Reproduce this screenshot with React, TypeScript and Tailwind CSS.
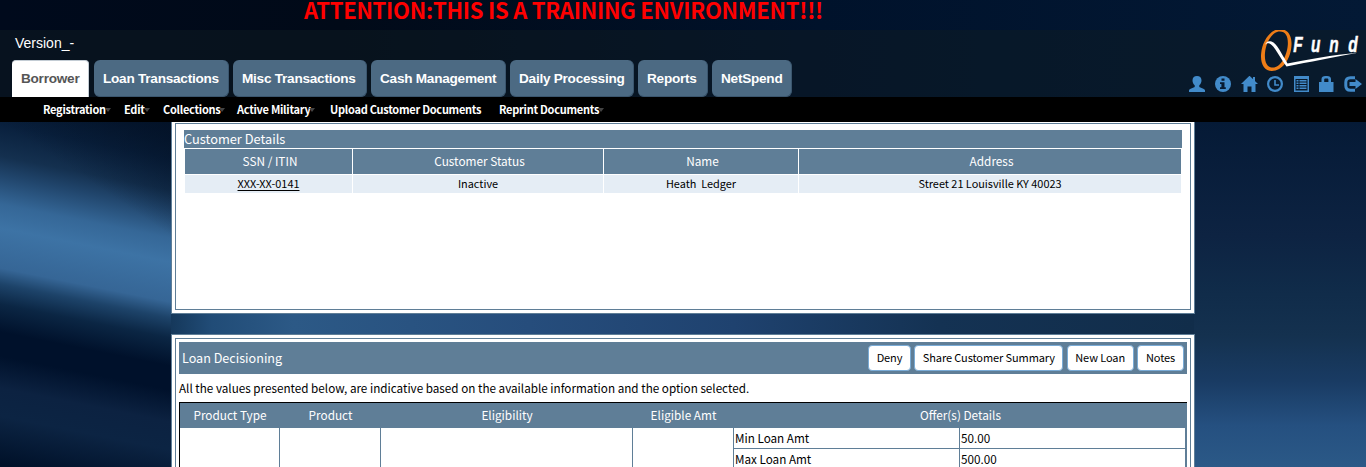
import React from "react";

const cjk = "font-['Noto_Sans_CJK_SC','Open_Sans',sans-serif]";

const idle = "rounded-[6px] bg-[#4c6a83] text-white border-r border-b border-[#3b566e]";

const tabs = [
  { label: "Borrower", box: "w-[77px] mr-[5px] rounded-t-[4px] bg-white text-[#555] border-r border-t border-[#c3ccd4]" },
  { label: "Loan Transactions", box: `w-[135px] mr-1 pt-px ${idle}` },
  { label: "Misc Transactions", box: `w-[134px] mr-1 pt-px ${idle}` },
  { label: "Cash Management", box: `w-[135px] mr-1 pt-px ${idle}` },
  { label: "Daily Processing", box: `w-[124px] mr-1 pt-px ${idle}` },
  { label: "Reports", box: `w-[70px] mr-1 pt-px ${idle}` },
  { label: "NetSpend", box: `w-[80px] pt-px ${idle}` },
];

const menu = [
  { label: "Registration", box: "w-[81px]", arrow: true },
  { label: "Edit", box: "w-[39px]", arrow: true },
  { label: "Collections", box: "w-[74px]", arrow: true },
  { label: "Active Military", box: "w-[93px]", arrow: true },
  { label: "Upload Customer Documents", box: "w-[169px]", arrow: false },
  { label: "Reprint Documents", box: "w-[104px]", arrow: true },
];

const customerHeads = ["SSN / ITIN", "Customer Status", "Name", "Address"];
const customerCell = "h-[18px] bg-[#e5edf5] text-[10.9px] leading-[17px]";

const actions = [
  { label: "Deny", box: "w-[43px]" },
  { label: "Share Customer Summary", box: "w-[149px]" },
  { label: "New Loan", box: "w-[67px]" },
  { label: "Notes", box: "w-[47px]" },
];

function Backdrop() {
  return (
    <svg className="absolute inset-0 -z-10" width="1366" height="467" viewBox="0 0 1366 467">
      <defs>
        <linearGradient id="top" x1="0" y1="0" x2="1" y2="0">
          <stop offset="0" stopColor="#000a1c" />
          <stop offset="0.25" stopColor="#010a18" />
          <stop offset="0.6" stopColor="#00122b" />
          <stop offset="1" stopColor="#031935" />
        </linearGradient>
        <linearGradient id="left" gradientUnits="userSpaceOnUse" x1="0" y1="80" x2="0" y2="480">
          <stop offset="0" stopColor="#04152c" />
          <stop offset="0.11" stopColor="#09203d" />
          <stop offset="0.19" stopColor="#14304f" />
          <stop offset="0.24" stopColor="#21466d" />
          <stop offset="0.31" stopColor="#356797" />
          <stop offset="0.37" stopColor="#3d73a5" />
          <stop offset="0.47" stopColor="#366696" />
          <stop offset="0.51" stopColor="#1d4369" />
          <stop offset="0.56" stopColor="#0b2644" />
          <stop offset="0.63" stopColor="#00112b" />
          <stop offset="0.69" stopColor="#00112b" />
          <stop offset="0.77" stopColor="#0c2241" />
          <stop offset="0.84" stopColor="#0c2443" />
          <stop offset="0.96" stopColor="#001129" />
        </linearGradient>
        <linearGradient id="shade" x1="0" y1="1" x2="1" y2="0">
          <stop offset="0.5" stopColor="#021024" stopOpacity="0" />
          <stop offset="1" stopColor="#021024" stopOpacity="0.75" />
        </linearGradient>
        <linearGradient id="middle" gradientUnits="userSpaceOnUse" x1="171" y1="330" x2="1194" y2="310">
          <stop offset="0" stopColor="#15385b" />
          <stop offset="0.04" stopColor="#214c77" />
          <stop offset="0.12" stopColor="#2c5986" />
          <stop offset="0.35" stopColor="#264d7c" />
          <stop offset="0.55" stopColor="#1f426f" />
          <stop offset="0.75" stopColor="#143253" />
          <stop offset="1" stopColor="#112d4a" />
        </linearGradient>
        <linearGradient id="right" gradientUnits="userSpaceOnUse" x1="0" y1="122" x2="0" y2="467">
          <stop offset="0" stopColor="#051a36" />
          <stop offset="0.33" stopColor="#0d2342" />
          <stop offset="0.5" stopColor="#102c4a" />
          <stop offset="0.62" stopColor="#14314f" />
          <stop offset="0.75" stopColor="#193b63" />
          <stop offset="0.88" stopColor="#255080" />
          <stop offset="1" stopColor="#2b5987" />
        </linearGradient>
      </defs>
      <rect y="60" width="180" height="440" transform="skewY(11.3)" fill="url(#left)" />
      <rect y="122" width="180" height="120" fill="url(#shade)" />
      <rect width="1366" height="122" fill="url(#top)" />
      <rect x="171" y="310" width="1024" height="30" fill="url(#middle)" />
      <rect x="1194" y="122" width="172" height="345" fill="url(#right)" />
    </svg>
  );
}

function Logo() {
  return (
    <svg width="106" height="41" viewBox="0 0 106 41" className="block">
      <path fillRule="evenodd" fill="#ee7d17" d="M20 -1C28 -1 32 6 31.500 15C31 29 22 41 12 41C4 41 0 33 1.200 23C2.500 10 11 -1 20 -1ZM19.800 1.500C12.500 1.500 6 12 5 23C4.300 32 7 37.500 13 37.500C20 37.500 26.800 27 27.800 15C28.300 7 26 1.500 19.800 1.500Z" />
      <path d="M5 15C6 11.500 8.500 10.500 11.500 11.500C17 13.500 21 23 27.500 33.500C48 29.500 72 25 98 22.800C72 27.500 50 32 26.500 36.500C19 26 14 15 9.500 13.500C7.500 13 6 13.500 5 15Z" fill="#fff" />
      <g transform="scale(0.7 1)" fill="#fff" stroke="#fff" strokeWidth="0.500" fontFamily="Liberation Sans" fontSize="22" fontWeight="700" fontStyle="italic">
        <text x="47.500" y="22">F</text>
        <text x="73" y="22">u</text>
        <text x="99" y="22">n</text>
        <text x="126" y="22">d</text>
      </g>
    </svg>
  );
}

function ToolIcons() {
  return (
    <svg width="178" height="18" viewBox="0 0.5 178 18" className="block" fill="#428bca">
      <path d="M1 16.500v-1.700c0-1.200 2.500-2 5.700-3.300V9.800C5.200 8.500 4.500 7 4.500 4.800C4.500 2 6.300.5 9 .5s4.500 1.500 4.500 4.300c0 2.200-.7 3.700-2.200 5v1.700c3.200 1.300 5.700 2.100 5.700 3.300v1.700z" />
      <circle cx="35" cy="8.500" r="8" />
      <path d="M33.500 3h3v2.300h-3zM32 6.800h4.500v5h1.300v1.700H32v-1.700h1.400V8.500H32z" fill="#071a30" />
      <path d="M61.500.2l8.500 8.300h-2.500v8h-4v-5.500h-4v5.500h-4v-8H53z M65 1.500h2v4h-2z" />
      <circle cx="87" cy="8.500" r="6.900" fill="none" stroke="#428bca" strokeWidth="2.200" />
      <path d="M87 4.500v5h4" fill="none" stroke="#428bca" strokeWidth="1.600" />
      <path fillRule="evenodd" d="M106 .5h15v16h-15zM107.500 3.500V15h12V3.500z" />
      <path d="M108.500 4.500h2V6h-2zM111.500 4.500h7V6h-7zM108.500 7h2v1.500h-2zM111.500 7h7v1.500h-7zM108.500 9.500h2V11h-2zM111.500 9.500h7V11h-7zM108.500 12h2v1.500h-2zM111.500 12h7v1.500h-7z" />
      <path fillRule="evenodd" d="M131 6.500h2.500V3.500c0-2 1.500-3 4-3h1.500c2.500 0 4 1 4 3v3h2.500v10H131zM136.200 6.500h4.200V4.300c0-.8-.5-1.300-1.300-1.300h-1.600c-.8 0-1.300.5-1.300 1.300z" />
      <path d="M167 2.300h-4.500c-3 0-4.700 1.500-4.700 4.500v3.500c0 3 1.700 4.500 4.700 4.500h4.500" fill="none" stroke="#428bca" strokeWidth="3" />
      <path d="M161.500 6.500h6v-3l6.500 5-6.500 5v-3h-6z" />
    </svg>
  );
}

export default function App() {
  return (
    <div className={`relative isolate w-[1366px] h-[467px] overflow-hidden text-black whitespace-nowrap ${cjk}`}>
      <Backdrop />
      <header className="h-[30px] pl-[304px] text-[22px] leading-[18px] tracking-[-0.26px] font-bold text-[#f00]">
        ATTENTION:THIS IS A TRAINING ENVIRONMENT!!!
      </header>
      <div className="h-[67px] bg-[#101c24]/45 flex justify-between">
        <div className="pl-3 font-['Liberation_Sans',sans-serif]">
          <div className="h-[30px] pl-[3px] text-[14px] leading-[27px] text-white">Version_-</div>
          <nav className="flex text-[13.6px] tracking-[-0.25px] font-bold leading-[36px]">
            {tabs.map((t) => (
              <div key={t.label} className={`h-[37px] pl-[9px] ${t.box}`}>{t.label}</div>
            ))}
          </nav>
        </div>
        <div className="w-[178px] flex flex-col items-end">
          <Logo />
          <div className="pt-[5px]"><ToolIcons /></div>
        </div>
      </div>
      <nav className="h-[25px] bg-black pl-[43px] flex items-start text-white font-bold text-[11px] tracking-[-0.27px] leading-[25px]">
        {menu.map((m) => (
          <div key={m.label} className={`${m.box} shrink-0 flex items-center`}>
            <span>{m.label}</span>
            {m.arrow && <span className="-ml-px w-0 h-0 border-x-[3px] border-x-transparent border-t-4 border-t-[#444]" />}
          </div>
        ))}
      </nav>
      <main className="ml-[171px] w-[1024px]">
        <section className="h-[192px] bg-white border border-t-0 border-[#5f7e97] px-[3px] pb-[3px] pt-px">
          <div className="h-full border border-[#5f7e97] px-2 pt-[6px]">
            <div className="h-[18px] w-[998px] bg-[#5f7e97] text-white text-[12.8px] leading-[18px]">Customer Details</div>
            <div className="mt-px ml-px w-[996px] grid grid-cols-[167px_250px_194px_382px] gap-px text-center">
              {customerHeads.map((h) => (
                <div key={h} className="h-[25px] pl-[3px] bg-[#5f7e97] text-white text-[11.8px] leading-[24px]">{h}</div>
              ))}
              <div className={`${customerCell} underline underline-offset-2`}>XXX-XX-0141</div>
              <div className={customerCell}>Inactive</div>
              <div className={customerCell}>Heath&nbsp; Ledger</div>
              <div className={customerCell}>Street 21 Louisville KY 40023</div>
            </div>
          </div>
        </section>
        <section className="mt-5 h-[160px] bg-white border border-b-0 border-[#5f7e97] px-[3px] pt-[3px]">
          <div className="h-full border border-b-0 border-[#5f7e97] p-[3px] pb-0">
            <div className="h-8 bg-[#5f7e97] flex items-center justify-between px-[3px]">
              <span className="text-white text-[12.6px]">Loan Decisioning</span>
              <div className="flex gap-[3.33px] text-[11px] tracking-[-0.1px] leading-[22px] text-center">
                {actions.map((a) => (
                  <button key={a.label} className={`h-[26px] pb-[2px] bg-white border border-[#79abd6] rounded ${a.box}`}>{a.label}</button>
                ))}
              </div>
            </div>
            <p className="h-7 text-[11.7px] leading-[28px]">All the values presented below, are indicative based on the available information and the option selected.</p>
            <div className="w-[1008px] border-t border-l border-black">
              <div className="h-[25px] bg-[#5f7e97] grid grid-cols-[100px_101px_252px_101px_453px] text-white text-[11.8px] leading-[24px] text-center">
                <span>Product Type</span><span>Product</span><span>Eligibility</span><span>Eligible Amt</span><span>Offer(s) Details</span>
              </div>
              <div className="grid grid-cols-[100px_101px_252px_101px_226px_227px] text-[11.7px]">
                {[0, 1, 2, 3].map((i) => <div key={i} className="h-[42px] border-r border-[#5f7e97]" />)}
                <div className="border-r border-[#5f7e97] pl-px leading-[20px]">
                  <div className="h-[21px] -ml-px pl-px border-b border-[#5f7e97]">Min Loan Amt</div>
                  <div className="h-[21px]">Max Loan Amt</div>
                </div>
                <div className="border-r-2 border-[#5f7e97] pl-px leading-[20px]">
                  <div className="h-[21px] -ml-px pl-px border-b border-[#5f7e97]">50.00</div>
                  <div className="h-[21px]">500.00</div>
                </div>
              </div>
            </div>
          </div>
        </section>
      </main>
    </div>
  );
}
